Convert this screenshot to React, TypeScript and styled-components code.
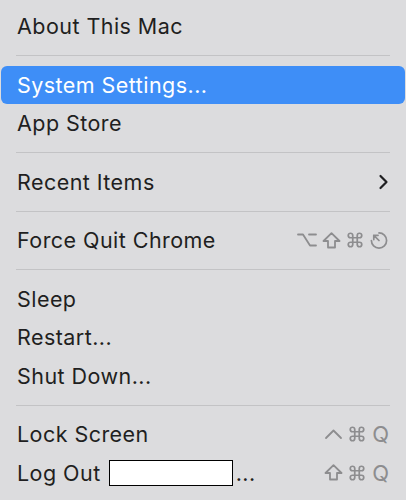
import styled, { createGlobalStyle } from "styled-components";

const GlobalStyle = createGlobalStyle`
  body {
    margin: 0;
    background: #dcdcde;
  }
`;

const Menu = styled.div`
  width: 406px;
  height: 500px;
  box-sizing: border-box;
  padding-top: 7px;
  background: #dcdcde;
  font-family: Inter, "Noto Sans", sans-serif;
  font-size: 21.5px;
  letter-spacing: 0.45px;
  color: #1f1f21;
`;

const Item = styled.div<{ $active?: boolean }>`
  display: flex;
  align-items: center;
  justify-content: space-between;
  height: 38.5px;
  margin: 0 1px;
  padding: 0 16px;
  border-radius: 6px;
  background: ${(p) => (p.$active ? "#3e8ef7" : "transparent")};
  color: ${(p) => (p.$active ? "#ffffff" : "#1f1f21")};
`;

const Label = styled.span`
  display: flex;
  align-items: center;
  white-space: nowrap;
`;

const Separator = styled.div`
  height: 1px;
  margin: 9.5px 16px;
  background: #c3c3c5;
`;

const Shortcut = styled.span`
  display: flex;
  align-items: center;
  gap: 5px;
  color: #8d8d8f;
`;

const KeyLetter = styled.span`
  font-size: 22px;
  letter-spacing: 0;
  color: #8d8d8f;
  margin-left: 1px;
`;

const Redacted = styled.span`
  display: inline-block;
  width: 122px;
  height: 24px;
  margin: 0 3px 0 8px;
  background: #ffffff;
  border: 1.5px solid #000000;
`;

const Chevron = () => (
  <svg width="11" height="16" viewBox="0 0 11 16">
    <polyline
      points="2.5,2 8.5,8 2.5,14"
      fill="none"
      stroke="#1f1f21"
      strokeWidth="2.2"
      strokeLinecap="round"
      strokeLinejoin="round"
    />
  </svg>
);

const stroke = {
  fill: "none",
  stroke: "#8d8d8f",
  strokeWidth: 1.8,
  strokeLinecap: "round" as const,
  strokeLinejoin: "round" as const,
};

const OptionKey = () => (
  <svg width="20" height="14" viewBox="0 0 20 14">
    <path d="M1 1.5 H6 L13 12.5 H19 M12 1.5 H19" {...stroke} />
  </svg>
);

const ShiftKey = () => (
  <svg width="19" height="17" viewBox="0 0 19 17">
    <path d="M9.5 1.2 L17.5 9 H13 V15.5 H6 V9 H1.5 Z" {...stroke} />
  </svg>
);

const CommandKey = () => (
  <svg width="18" height="18" viewBox="0 0 24 24">
    <path
      d="M15 6v12a3 3 0 1 0 3-3H6a3 3 0 1 0 3 3V6a3 3 0 1 0-3 3h12a3 3 0 1 0-3-3"
      {...stroke}
      strokeWidth={2.3}
    />
  </svg>
);

const ControlKey = () => (
  <svg width="19" height="12" viewBox="0 0 19 12">
    <polyline points="2,10 9.5,2.5 17,10" {...stroke} />
  </svg>
);

const EscapeKey = () => (
  <svg width="20" height="19" viewBox="0 0 20 20">
    <path d="M10 2 A8 8 0 1 1 2 10" {...stroke} />
    <path d="M10 10 L4.5 4.5 M4.5 9 V4.5 H9" {...stroke} />
  </svg>
);

export default function App() {
  return (
    <>
      <GlobalStyle />
      <Menu>
        <Item>
          <Label>About This Mac</Label>
        </Item>
        <Separator />
        <Item $active>
          <Label>System Settings...</Label>
        </Item>
        <Item>
          <Label>App Store</Label>
        </Item>
        <Separator />
        <Item>
          <Label>Recent Items</Label>
          <Chevron />
        </Item>
        <Separator />
        <Item>
          <Label>Force Quit Chrome</Label>
          <Shortcut>
            <OptionKey />
            <ShiftKey />
            <CommandKey />
            <EscapeKey />
          </Shortcut>
        </Item>
        <Separator />
        <Item>
          <Label>Sleep</Label>
        </Item>
        <Item>
          <Label>Restart...</Label>
        </Item>
        <Item>
          <Label>Shut Down...</Label>
        </Item>
        <Separator />
        <Item>
          <Label>Lock Screen</Label>
          <Shortcut>
            <ControlKey />
            <CommandKey />
            <KeyLetter>Q</KeyLetter>
          </Shortcut>
        </Item>
        <Item>
          <Label>
            Log Out
            <Redacted />
            ...
          </Label>
          <Shortcut>
            <ShiftKey />
            <CommandKey />
            <KeyLetter>Q</KeyLetter>
          </Shortcut>
        </Item>
      </Menu>
    </>
  );
}
